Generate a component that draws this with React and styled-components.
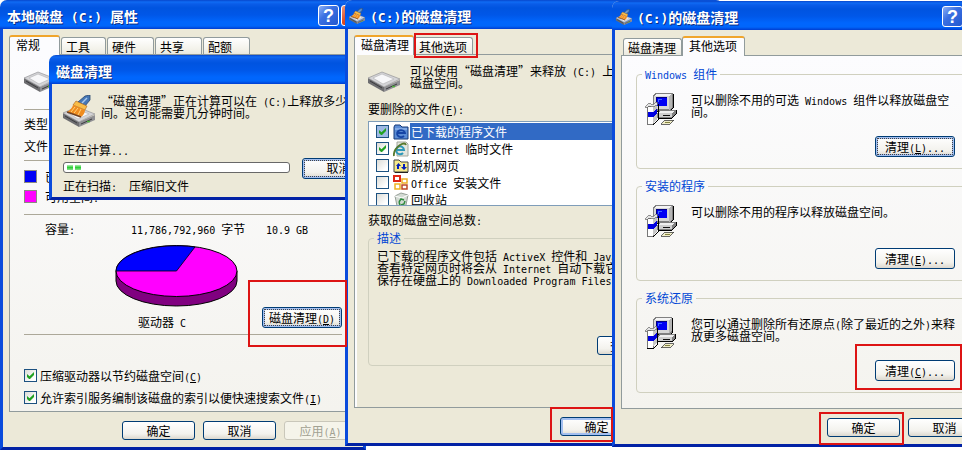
import styled, { createGlobalStyle, css } from "styled-components";
import { useState } from "react";

const GlobalStyle = createGlobalStyle`
  * { box-sizing: border-box; }
  body {
    margin: 0;
    overflow: hidden;
    background: #fff;
    color: #000;
    font: 12px/12px "Noto Sans CJK SC", "Liberation Sans", sans-serif;
  }
  p { margin: 0; }
`;

//icons//

const DriveShape = () => (
  <g>
    <path d="M0 16 16 25 16 30 0 21Z" fill="#6d6d70" />
    <path d="M16 25 32 18 32 23 16 30Z" fill="#8f8f93" />
    <path d="M0 16 14 10 32 17 16 25Z" fill="#d4d4d7" stroke="#88888b" strokeWidth=".6" />
    <path d="M5 16 14 12 26 17 15 22Z" fill="#f7f7f9" stroke="#b1b1b4" strokeWidth=".6" />
    <path d="M2 19 14 26M18 27 29 22" stroke="#3c3c3f" />
    <path d="M24 24.500h3" stroke="#4fb53d" strokeWidth="1.5" />
  </g>
);

const DriveIcon = () => (
  <svg width="32" height="32" viewBox="0 4 32 32" aria-hidden="true">
    <DriveShape />
  </svg>
);

const CleanupIcon = ({ size = 32 }) => (
  <svg width={size} height={size} viewBox="0 0 32 32" aria-hidden="true">
    <g transform="translate(0 2)">
      <DriveShape />
    </g>
    <path d="M22 1 27 0 27 5 22 11 15 7Z" fill="#4677b5" stroke="#28466f" strokeWidth=".8" />
    <path d="M24 3 19 8" stroke="#a9c9ec" strokeWidth="1.5" />
    <path d="M13 6 24 11 22 15 10 10Z" fill="#f9bd48" stroke="#a7611c" strokeWidth=".6" />
    <path d="M10 10 22 15Q22 19 18 22L4 17Q9 14 10 10Z" fill="#ef8c20" />
    <path d="M12 12 8 17M15 13 11 18M18 14 15 20" stroke="#ffd37a" />
    <path d="M4 17 18 22" stroke="#6e4225" strokeWidth="1.5" />
  </svg>
);

const SetupIcon = () => (
  <svg width="32" height="32" viewBox="0 0 32 32" shapeRendering="crispEdges" aria-hidden="true">
    <path d="M8 2 10 0H27L28 1V15L25 18H8Z" fill="#808080" />
    <path d="M28 1V15L25 18H10" fill="none" stroke="#000" />
    <path d="M9 3 11 1H27L25 3Z" fill="#f4f4f4" />
    <path d="M9 3H24V16H9Z" fill="#d8d8d8" />
    <path d="M24 3 27 1V14L24 17Z" fill="#b4b4b4" />
    <path d="M11 4H22V13H11Z" fill="#000080" />
    <path d="M12 5H22V13H12Z" fill="#0000f4" />
    <path d="M13 6h4v1h-3v2h-1Z" fill="#3c6cff" />
    <path d="M12 20 15 17H31V21L27 25H12Z" fill="#808080" />
    <path d="M31 17V21L27 25H13" fill="none" stroke="#000" />
    <path d="M13 20 16 18H30L27 20Z" fill="#f0f0f0" />
    <path d="M13 20H27V24H13Z" fill="#cfcfcf" />
    <path d="M18 22h7v1h-7Z" fill="#111" />
    <path d="M2 13H9V32H2Z" fill="#777" />
    <path d="M13 11V27L8 32H2" fill="none" stroke="#000" />
    <path d="M3 14H8V31H3Z" fill="#fff" />
    <path d="M8 14 12 12V26L8 30Z" fill="#c6c6c6" />
    <path d="M3 19H8V24H3ZM8 19 12 16V21L8 24Z" fill="#0000e0" />
    <path d="M0 14 4 10 7 12 12 9 12 12 8 14 4 13 1 15Z" fill="#e4e4e4" stroke="#666" strokeWidth=".7" />
    <path d="M16 31 20 27H29L25 31Z" fill="#f0edc8" stroke="#444" strokeWidth=".8" />
    <path d="M20 29h5" stroke="#858340" />
  </svg>
);

const FileIcon = ({ kind }) => (
  <svg width="16" height="16" viewBox="0 0 16 16" aria-hidden="true">
    {kind === "programs" && (
      <>
        <path d="M1 3 2 1H7L9 3H15V15H1Z" fill="#5b8cd5" stroke="#163a78" />
        <path d="M2 5H14" stroke="#a6c6f4" />
        <path d="M5 9H12A4 3.5 0 1 0 11 12" fill="none" stroke="#1645a5" strokeWidth="1.8" />
      </>
    )}
    {kind === "internet" && (
      <>
        <path d="M4 1H13L15 3V15H4Z" fill="#e4e6df" stroke="#a2a79c" />
        <path d="M4 9H11A4 4 0 1 0 10 12" fill="none" stroke="#2d98b8" strokeWidth="2" />
        <path d="M1 15Q0 9 7 4Q12 1 13 4" fill="none" stroke="#58792c" strokeWidth="1.8" />
      </>
    )}
    {kind === "offline" && (
      <>
        <path d="M1 4V2H6L8 4H15V14H1Z" fill="#f6e98a" stroke="#444" />
        <path d="M3 8 5.500 5 8 8H6V11H4V8ZM8 9H10V6H12V9H14L11 12Z" fill="#001cbb" />
        <path d="M2 14.500H15" stroke="#222" />
      </>
    )}
    {kind === "office" && (
      <>
        <path d="M1 1H7V6H1Z" fill="#fff" stroke="#df2816" strokeWidth="2" />
        <path d="M9 4H14V8H9Z" fill="#fff" stroke="#edae25" strokeWidth="1.5" />
        <path d="M2 9H7V14H2Z" fill="#fff" stroke="#efb420" strokeWidth="1.5" />
        <path d="M9 10H14V14H9Z" fill="#fff" stroke="#bd4925" strokeWidth="1.5" />
      </>
    )}
    {kind === "recycle" && (
      <>
        <path d="M2 4 8 1 15 3 13 13 9 16 4 14Z" fill="#d2dad3" stroke="#969f98" />
        <path d="M2 4 9 6 15 3" fill="none" stroke="#fff" />
        <path d="M6 10 8 7 11 8M12 9 11 12 8 13M7 13 6 10" fill="none" stroke="#2d8a3d" strokeWidth="1.5" />
      </>
    )}
  </svg>
);

const PieChart = () => (
  <svg width="123" height="62" viewBox="0 0 123 62" role="img" aria-label="驱动器 C">
    <path d="M1 26V36A60.500 25 0 0 0 122 36V26Z" fill="#800080" stroke="#000" />
    <ellipse cx="61.500" cy="26" rx="60.500" ry="25.500" fill="#f0f" stroke="#000" />
    <path d="M61.500 26H1A60.500 25.500 0 0 1 80 2Z" fill="#00f" stroke="#000" strokeWidth=".8" />
  </svg>
);

const TitleButton = ({ close }) => (
  <CaptionButton type="button" $close={close} aria-label={close ? "关闭" : "帮助"}>
    {close ? "×" : "?"}
  </CaptionButton>
);

const WindowTitle = ({ icon, buttons, children }) => (
  <TitleBar $icon={icon}>
    {icon && <CleanupIcon size={16} />}
    <h2>{children}</h2>
    {buttons && (
      <Captions>
        <TitleButton />
        <TitleButton close />
      </Captions>
    )}
  </TitleBar>
);

const files = [
  { kind: "programs", label: "已下载的程序文件", checked: true },
  { kind: "internet", latin: "Internet ", label: "临时文件", checked: true },
  { kind: "offline", label: "脱机网页" },
  { kind: "office", latin: "Office ", label: "安装文件" },
  { kind: "recycle", label: "回收站" },
];

const FileList = () => {
  const [selected, setSelected] = useState(0);

  return (
    <List aria-label="要删除的文件">
      {files.map((file, i) => (
        <FileRow key={file.kind} $selected={i === selected} onClick={() => setSelected(i)}>
          <Check type="checkbox" defaultChecked={file.checked} />
          <FileIcon kind={file.kind} />
          <span>
            {file.latin && <Latin>{file.latin}</Latin>}
            {file.label}
          </span>
        </FileRow>
      ))}
    </List>
  );
};

const CleanGroup = ({ title, hotkey, marked, children }) => (
  <Group>
    <legend>{title}</legend>
    <GroupRow>
      <SetupIcon />
      <p>{children}</p>
    </GroupRow>
    <GroupAction>
      <Marked>
        <Button type="button" $wide $focused={hotkey === "L"}>
          清理<Latin>(<u>{hotkey}</u>)...</Latin>
        </Button>
        {marked && <Mark $inset="-16px -7px -9px -20px" />}
      </Marked>
    </GroupAction>
  </Group>
);

const ProgressDialog = () => (
  <Dialog>
    <WindowTitle>磁盘清理</WindowTitle>
    <DialogBody>
      <DialogMessage>
        <CleanupIcon />
        <p>
          “磁盘清理”正在计算可以在<Latin> (C:)</Latin>上释放多少空
          <br />
          间。这可能需要几分钟时间。
        </p>
      </DialogMessage>
      <DialogStatus>
        <div>
          <p>正在计算<Latin>...</Latin></p>
          <Progress role="progressbar" aria-label="正在计算" aria-valuenow={6}>
            <i />
            <i />
          </Progress>
          <p>正在扫描<Latin>:  </Latin>压缩旧文件</p>
        </div>
        <Button type="button" $focused>取消</Button>
      </DialogStatus>
    </DialogBody>
  </Dialog>
);

const Properties = () => (
  <Window $extra={21}>
    <WindowTitle buttons>
      本地磁盘<Latin> (C:) </Latin>属性
    </WindowTitle>
    <Body>
      <Tabs role="tablist" $spaced>
        <Tab role="tab" aria-selected="true" $active $size={51}>常规</Tab>
        <Tab role="tab" $size={45}>工具</Tab>
        <Tab role="tab" $size={47}>硬件</Tab>
        <Tab role="tab" $size={47}>共享</Tab>
        <Tab role="tab" $size={47}>配额</Tab>
      </Tabs>
      <Panel>
        <DriveHeader><DriveIcon /></DriveHeader>
        <Details>
          <p>类型<Latin>:</Latin></p>
          <p>文件系统<Latin>:</Latin></p>
        </Details>
        <Usage>
          <UsageRow><Swatch $color="#0000f6" /><span>已用空间<Latin>:</Latin></span></UsageRow>
          <UsageRow><Swatch $color="#f0f" /><span>可用空间<Latin>:</Latin></span></UsageRow>
        </Usage>
        <Capacity>
          <span>容量<Latin>:</Latin></span>
          <span><Latin>11,786,792,960 </Latin>字节</span>
          <span><Latin>10.9 GB</Latin></span>
        </Capacity>
        <ChartRow>
          <Chart>
            <PieChart />
            <figcaption>驱动器<Latin> C</Latin></figcaption>
          </Chart>
          <Marked>
            <Button type="button" $wide $focused>
              磁盘清理<Latin>(<u>D</u>)</Latin>
            </Button>
            <Mark $inset="-27px -5px -19px -14px" />
          </Marked>
        </ChartRow>
        <Options>
          <CheckLabel>
            <Check type="checkbox" defaultChecked />
            <span>压缩驱动器以节约磁盘空间<Latin>(<u>C</u>)</Latin></span>
          </CheckLabel>
          <CheckLabel>
            <Check type="checkbox" defaultChecked />
            <span>允许索引服务编制该磁盘的索引以便快速搜索文件<Latin>(<u>I</u>)</Latin></span>
          </CheckLabel>
        </Options>
      </Panel>
      <Footer>
        <Button type="button">确定</Button>
        <Button type="button">取消</Button>
        <Button type="button" disabled>应用<Latin>(<u>A</u>)</Latin></Button>
      </Footer>
    </Body>
    <ProgressDialog />
  </Window>
);

const CleanupFiles = () => (
  <Window $extra={111}>
    <WindowTitle icon buttons>
      <Latin>(C:)</Latin>的磁盘清理
    </WindowTitle>
    <Body>
      <Tabs role="tablist">
        <Tab role="tab" aria-selected="true" $active $size={60}>磁盘清理</Tab>
        <Marked>
          <Tab role="tab" $size={59}>其他选项</Tab>
          <Mark $inset="-4px -5px -3px 0" />
        </Marked>
      </Tabs>
      <Panel $plain>
        <Intro>
          <DriveIcon />
          <p>
            可以使用“磁盘清理”来释放<Latin> (C:) </Latin>上
            <br />
            磁盘空间。
          </p>
        </Intro>
        <p>要删除的文件<Latin>(<u>F</u>):</Latin></p>
        <FileList />
        <p>获取的磁盘空间总数<Latin>:</Latin></p>
        <Description>
          <legend>描述</legend>
          <p>
            已下载的程序文件包括<Latin> ActiveX </Latin>控件和<Latin> Java</Latin>
            <br />
            查看特定网页时将会从<Latin> Internet </Latin>自动下载它
            <br />
            保存在硬盘上的<Latin> Downloaded Program Files</Latin>
          </p>
          <GroupAction>
            <Button type="button" $view>查看文件<Latin>(<u>V</u>)</Latin></Button>
          </GroupAction>
        </Description>
      </Panel>
      <Footer>
        <Marked>
          <Button type="button" $default>确定</Button>
          <Mark $inset="-10px 20px -6px -10px" />
        </Marked>
        <Button type="button">取消</Button>
      </Footer>
    </Body>
  </Window>
);

const CleanupMore = () => (
  <Window $extra={28} $top={1}>
    <WindowTitle icon buttons>
      <Latin>(C:)</Latin>的磁盘清理
    </WindowTitle>
    <Body>
      <Tabs role="tablist" $indent>
        <Tab role="tab" $size={59}>磁盘清理</Tab>
        <Tab role="tab" aria-selected="true" $active $size={63}>其他选项</Tab>
      </Tabs>
      <Panel>
        <Groups>
          <CleanGroup title={<><Latin>Windows </Latin>组件</>} hotkey="L">
            可以删除不用的可选<Latin> Windows </Latin>组件以释放磁盘空
            <br />
            间。
          </CleanGroup>
          <CleanGroup title="安装的程序" hotkey="E">
            可以删除不用的程序以释放磁盘空间。
          </CleanGroup>
          <CleanGroup title="系统还原" hotkey="C" marked>
            您可以通过删除所有还原点<Latin>(</Latin>除了最近的之外<Latin>)</Latin>来释
            <br />
            放更多磁盘空间。
          </CleanGroup>
        </Groups>
      </Panel>
      <Footer>
        <Marked>
          <Button type="button">确定</Button>
          <Mark $inset="-6px -4px -8px -8px" />
        </Marked>
        <Button type="button">取消</Button>
      </Footer>
    </Body>
  </Window>
);

const App = () => (
  <>
    <GlobalStyle />
    <Desktop lang="zh-CN">
      <Properties />
      <CleanupFiles />
      <CleanupMore />
    </Desktop>
  </>
);

//styled-components//

const Desktop = styled.main`
  display: grid;
  grid-template-columns: minmax(0, 345fr) minmax(0, 267fr) minmax(0, 350fr);
  align-items: start;
  min-height: 100vh;
  overflow: hidden;
  white-space: nowrap;
`;

// half-width latin: one letter takes half of a chinese glyph
const Latin = styled.span`
  font-family: "DejaVu Sans Mono", "Liberation Mono", monospace;
  font-size: 10px;
  line-height: 0;
  white-space: pre;
`;

const Window = styled.section`
  position: relative;
  width: calc(100% + ${({ $extra }) => $extra}px);
  margin-top: ${({ $top = 0 }) => $top}px;
  background: #ece9d8;
  border-radius: 7px 7px 0 0;
`;

const TitleBar = styled.header`
  display: flex;
  align-items: center;
  gap: 5px;
  height: 29px;
  padding: 2px 4px 0 ${({ $icon }) => ($icon ? 4 : 7)}px;
  border-radius: 7px 7px 0 0;
  color: #fff;
  background: linear-gradient(
    #0847cc 0,
    #0f6bf4 2px,
    #0a5ce8 4px,
    #0054e0 8px,
    #0057e8 15px,
    #0066fd 22px,
    #0066fb 26px,
    #003dd0 29px
  );

  h2 {
    margin: 0;
    font-size: 14px;
    line-height: 16px;
    text-shadow: 1px 1px #0a2d84;
  }

  ${Latin} {
    font-size: 13px;
  }
`;

const Captions = styled.div`
  display: flex;
  gap: 2px;
  margin-left: auto;
`;

const CaptionButton = styled.button`
  width: 21px;
  height: 21px;
  padding: 0;
  border: 1px solid #fff;
  border-radius: 3px;
  color: #fff;
  font: bold 18px/18px "Liberation Sans", sans-serif;
  background: ${({ $close }) =>
    $close
      ? "linear-gradient(135deg, #ee9a80, #dc4a22 45%, #b32c09)"
      : "linear-gradient(135deg, #8cb0f5, #3b70e2 40%, #2358cf)"};
`;

const Body = styled.div`
  padding: 6px 6px 7px;
  border: 3px solid #0a4bdc;
  border-top: 0;
  border-bottom-color: #0222a5;
`;

const Tabs = styled.div`
  position: relative;
  display: flex;
  align-items: flex-end;
  gap: ${({ $spaced }) => ($spaced ? 1 : 0)}px;
  height: 20px;
  margin-bottom: -1px;
  padding-left: ${({ $indent }) => ($indent ? 2 : 0)}px;
`;

const Tab = styled.button`
  display: block;
  width: ${({ $size }) => $size}px;
  height: 17px;
  margin-bottom: 1px;
  padding: 2px 0 0 4px;
  border: 1px solid #919b9c;
  border-bottom: 0;
  border-radius: 3px 3px 0 0;
  color: inherit;
  font: inherit;
  text-align: left;
  background: linear-gradient(#fff, #f3f2ea 70%, #ebe9df);

  ${({ $active }) =>
    $active &&
    css`
      height: 20px;
      margin-bottom: 0;
      padding: 0 0 2px 6px;
      border-top: 2px solid #f0a52c;
      background: #fcfcfe;
    `}
`;

const Panel = styled.div`
  padding: 0 ${({ $plain }) => ($plain ? 13 : 14)}px;
  border: 1px solid #919b9c;
  background: ${({ $plain }) => ($plain ? "#ece9d8" : "linear-gradient(#fcfcfe, #f4f3ee)")};
  box-shadow: ${({ $plain }) => ($plain ? "inset 2px 0 #fcfcfe" : "none")};
`;

const DriveHeader = styled.div`
  padding: 11px 0;

  svg {
    display: block;
  }
`;

const Details = styled.div`
  display: grid;
  gap: 10px;
  padding: 8px 0;
  border-top: 1px solid #aca899;
`;

const Usage = styled.div`
  display: grid;
  gap: 7px;
  padding: 9px 0 11px;
  border-top: 1px solid #aca899;
`;

const UsageRow = styled.div`
  display: flex;
  align-items: center;
  height: 13px;
`;

const Swatch = styled.i`
  width: 13px;
  height: 13px;
  margin-right: 8px;
  border: 1px solid #8a8a80;
  background: ${({ $color }) => $color};
`;

const Capacity = styled.div`
  display: grid;
  grid-template-columns: 86px 135px auto;
  padding: 8px 0 0 21px;
  border-top: 1px solid #aca899;
`;

const ChartRow = styled.div`
  display: flex;
  justify-content: space-between;
  align-items: flex-end;
  padding: 10px 0 6px;
  border-bottom: 1px solid #aca899;
`;

const Chart = styled.figure`
  margin: 0 0 0 91px;

  svg {
    display: block;
    margin-bottom: 9px;
  }

  figcaption {
    padding-left: 23px;
  }
`;

const Options = styled.div`
  display: grid;
  gap: 9px;
  padding: 34px 0 7px;
`;

const CheckLabel = styled.label`
  display: flex;
  align-items: center;
  gap: 3px;
  height: 13px;
`;

const Check = styled.input`
  appearance: none;
  flex: none;
  display: grid;
  place-items: center;
  width: 13px;
  height: 13px;
  margin: 0;
  border: 1px solid #1c5180;
  background: linear-gradient(135deg, #dcdcd7, #fff 80%);

  &:checked::before {
    content: "";
    width: 7px;
    height: 7px;
    background: #21a121;
    clip-path: polygon(0 29%, 0 71%, 29% 100%, 43% 100%, 100% 43%, 100% 0, 36% 60%);
  }
`;

const Footer = styled.footer`
  display: flex;
  justify-content: flex-end;
  gap: 8px;
  padding-top: 9px;
`;

const Button = styled.button`
  display: block;
  width: ${({ $wide, $view }) => ($wide ? 80 : $view ? 92 : 73)}px;
  height: ${({ $wide, $focused }) => ($wide || $focused ? 21 : 19)}px;
  padding: 0;
  border: 1px solid #003c74;
  border-radius: 3px;
  color: #000;
  font: inherit;
  background: linear-gradient(#fff, #f3f2ed 70%, #dcd8ce);

  ${({ $default, $focused }) =>
    ($default || $focused) &&
    css`
      box-shadow: inset 0 0 0 2px #a3bff0, inset 0 -2px #6f93dd;
    `}

  ${({ $focused }) =>
    $focused &&
    css`
      outline: 1px dotted #444;
      outline-offset: -3px;
    `}

  &:disabled {
    border-color: #c9c7ba;
    color: #a1a192;
    background: #f5f4ea;
  }
`;

const Marked = styled.div`
  position: relative;
`;

// red callout drawn over the control it belongs to
const Mark = styled.span`
  position: absolute;
  z-index: 1;
  inset: ${({ $inset }) => $inset};
  border: 2px solid #dd1414;
  pointer-events: none;
`;

const Dialog = styled.section`
  position: absolute;
  top: 55px;
  left: 49px;
  right: -23px;
  border-radius: 7px 7px 0 0;
  background: #ece9d8;
`;

const DialogBody = styled.div`
  padding: 11px 11px 5px;
  border: 3px solid #0a4bdc;
  border-top: 0;
  border-bottom-color: #0222a5;
`;

const DialogMessage = styled.div`
  display: flex;
  gap: 6px;
  margin-bottom: 17px;
`;

const DialogStatus = styled.div`
  display: flex;
  align-items: center;
  gap: 12px;

  > div {
    flex: 1;
  }
`;

const Progress = styled.div`
  display: flex;
  gap: 2px;
  height: 11px;
  margin: 6px 0 7px;
  padding: 2px 3px;
  border: 1px solid #686868;
  border-radius: 3px;
  background: #fff;

  i {
    width: 6px;
    background: linear-gradient(#b5ecb7, #2fcf37 50%, #8be08f);
  }
`;

const Intro = styled.div`
  display: flex;
  align-items: flex-end;
  gap: 10px;
  height: 43px;
  margin-bottom: 5px;

  p {
    align-self: flex-start;
    padding-top: 10px;
  }
`;

const List = styled.div`
  height: 85px;
  margin: 6px 0 8px;
  padding: 1px 1px 0;
  overflow: hidden;
  border: 1px solid #7f9db9;
  background: #fff;
`;

const FileRow = styled.label`
  display: flex;
  align-items: center;
  height: 17px;
  padding-left: 6px;

  svg {
    margin: 0 1px 0 4px;
  }

  > span {
    flex: 1;
    padding-left: 1px;
    line-height: 17px;
  }

  ${({ $selected }) =>
    $selected &&
    css`
      > span {
        color: #fff;
        background: #316ac5;
      }

      ${Check} {
        background: #9db9e4;
      }
    `}
`;

const Group = styled.fieldset`
  min-width: 0;
  margin: 0;
  padding: 13px 10px 11px 8px;
  border: 1px solid #d0d0bf;
  border-radius: 4px;

  legend {
    margin-left: -3px;
    padding: 0 3px;
    color: #0046d5;
  }
`;

const Description = styled(Group)`
  margin: 6px 0 41px;
  padding: 6px 10px 10px 8px;

  p {
    margin-bottom: 50px;
  }
`;

const Groups = styled.div`
  display: grid;
  gap: 11px;
  padding: 12px 0 15px;
`;

const GroupRow = styled.div`
  display: flex;
  gap: 14px;
  margin-bottom: 11px;

  p {
    padding-top: 1px;
  }
`;

const GroupAction = styled.div`
  display: flex;
  justify-content: flex-end;
`;

export default App;
